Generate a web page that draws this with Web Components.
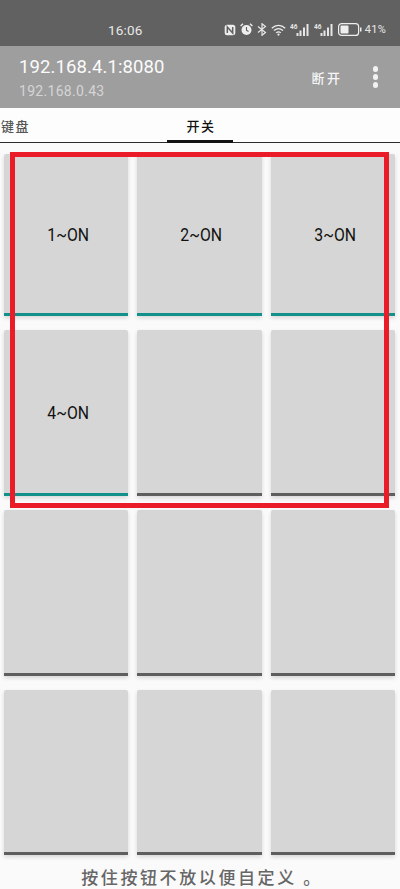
<!DOCTYPE html>
<html lang="zh"><head><meta charset="utf-8"><style>
html,body{margin:0;padding:0;width:400px;height:889px;overflow:hidden;background:#fafafa;font-family:"Roboto","Noto Sans CJK SC",sans-serif}
</style></head><body>
<remote-app></remote-app>
<script>
function def(name,css,html){
  customElements.define(name,class extends HTMLElement{
    constructor(){super();this.attachShadow({mode:'open'}).innerHTML='<style>'+css+'</style>'+html;}
  });
}
const bars='<svg width="20" height="14" viewBox="0 0 20 14"><g fill="#e6e6e6"><rect x="6.500" y="10" width="2" height="3"/><rect x="9.500" y="7.500" width="2" height="5.500"/><rect x="13" y="4.500" width="2" height="8.500"/><rect x="16.500" y="1" width="2" height="12"/></g><text x="0" y="6" font-size="6.500" font-weight="700" font-family="Roboto" fill="#e6e6e6">46</text></svg>';
def('status-bar',`:host{display:flex;align-items:center;height:46px;background:#616161;color:#e8e8e8;box-sizing:border-box;padding:13px 14px 0 108px;font-family:Roboto,sans-serif}
.t{flex:none;font-size:13.500px;letter-spacing:.2px}
.i{display:flex;align-items:center;gap:4px;margin-left:auto}
svg{display:block}.p{font-size:11px;margin-left:-1px;letter-spacing:.3px}`,
`<span class="t">16:06</span><span class="i">
<svg width="12" height="12" viewBox="0 0 12 12"><rect x=".7" y=".7" width="10.600" height="10.600" rx="2.500" fill="#eee"/><path d="M3.300 9V3l5.400 6V3" fill="none" stroke="#616161" stroke-width="1.500"/></svg>
<svg width="13" height="13" viewBox="0 0 13 13"><circle cx="6.500" cy="7" r="5" fill="#eee"/><path d="M6.500 4v3.200l2 1.300" fill="none" stroke="#616161" stroke-width="1.100"/><path d="M.6 3 3 .8M12.400 3 10 .8" stroke="#eee" stroke-width="1.400"/></svg>
<svg width="10" height="13" viewBox="0 0 10 13"><path d="M1 3.500l7.500 6L5 12.300V.7l3.500 2.800L1 9.500" fill="none" stroke="#e6e6e6" stroke-width="1.200"/></svg>
<svg width="15" height="12" viewBox="0 0 15 12"><path d="M.8 4.200c4-3.800 9.400-3.800 13.400 0M3 6.600c2.800-2.500 6.200-2.500 9 0M5.200 8.800c1.500-1.200 3.100-1.200 4.600 0" fill="none" stroke="#eee" stroke-width="1.300"/><circle cx="7.500" cy="10.600" r="1.100" fill="#eee"/></svg>
${bars}${bars}
<svg width="24" height="13" viewBox="0 0 24 13"><rect x=".6" y=".6" width="20" height="11.800" rx="3" fill="none" stroke="#eee" stroke-width="1.200"/><rect x="2.500" y="2.500" width="8" height="8" rx="1" fill="#eee"/><rect x="22" y="4.500" width="1.500" height="4" fill="#eee"/></svg>
<span class="p">41%</span></span>`);

def('app-bar',`:host{display:flex;align-items:center;height:62px;background:#9e9e9e;color:#fff;box-sizing:border-box;padding:0 22px 0 19px}
.l{flex:1;display:flex;flex-direction:column;gap:5px;padding-top:1px}
.a{font:18.500px/22px Roboto,sans-serif;letter-spacing:.1px;color:#fbfbfb}
.b{font:14px/16px Roboto,sans-serif;color:#d5d5d5;letter-spacing:.3px}
.d{font:500 13px "Noto Sans CJK SC",sans-serif;letter-spacing:2.500px;margin-right:30px;color:#f5f5f5}
.m{display:flex;flex-direction:column;gap:2.500px}.m i{width:5.500px;height:5.500px;border-radius:50%;background:#f2f2f2}`,
`<div class="l"><div class="a">192.168.4.1:8080</div><div class="b">192.168.0.43</div></div><span class="d">断开</span><span class="m"><i></i><i></i><i></i></span>`);

def('tab-bar',`:host{display:flex;height:35px;box-sizing:border-box;background:#fdfdfd;border-bottom:1px solid #2a2a2a;padding-left:1px;font:500 13px/36px "Noto Sans CJK SC",sans-serif;letter-spacing:1.500px;color:#555}
.k{width:29px;flex:none}
.s{width:66px;flex:none;margin-left:137px;text-align:center;color:#111;border-bottom:3px solid #111;margin-bottom:-1px;box-sizing:border-box;padding-left:2px}`,
`<div class="k">键盘</div><div class="s">开关</div>`);

def('switch-button',`:host{display:flex;align-items:center;justify-content:center;background:#d5d6d5;border-radius:2px 2px 0 0;border-bottom:3px solid var(--bar,#5e5e5e);box-shadow:0 2px 4px rgba(0,0,0,.14);box-sizing:border-box;color:#111;font:17.500px Roboto,"Noto Sans CJK SC",sans-serif;padding:2px 0 0 4px}
:host([on]){--bar:#12908a}
span{display:inline-block;transform:scaleX(.9)}`,`<span><slot></slot></span>`);

def('button-grid',`:host{display:grid;grid-template-columns:repeat(3,1fr);grid-template-rows:162px 166px 166px 165px;column-gap:9px;row-gap:14px;padding:11px 5px 0 4px}`,`<slot></slot>`);

def('hint-bar',`:host{display:block;text-align:center;color:#666;font:500 17px/24px "Noto Sans CJK SC",sans-serif;letter-spacing:2.600px;padding:10px 0 0 4px}`,`<slot></slot>`);

def('mark-box',`:host{position:absolute;left:10px;top:152px;width:379px;height:356px;box-sizing:border-box;border:5px solid #e91c28;pointer-events:none}`,``);

def('remote-app',`:host{display:block;position:relative;width:400px;height:889px;overflow:hidden;background:#fafafa}`,
`<status-bar></status-bar><app-bar></app-bar><tab-bar></tab-bar>
<button-grid>
<switch-button on>1~ON</switch-button><switch-button on>2~ON</switch-button><switch-button on>3~ON</switch-button>
<switch-button on>4~ON</switch-button><switch-button></switch-button><switch-button></switch-button>
<switch-button></switch-button><switch-button></switch-button><switch-button></switch-button>
<switch-button></switch-button><switch-button></switch-button><switch-button></switch-button>
</button-grid>
<hint-bar>按住按钮不放以便自定义 。</hint-bar><mark-box></mark-box>`);
</script>
</body></html>
